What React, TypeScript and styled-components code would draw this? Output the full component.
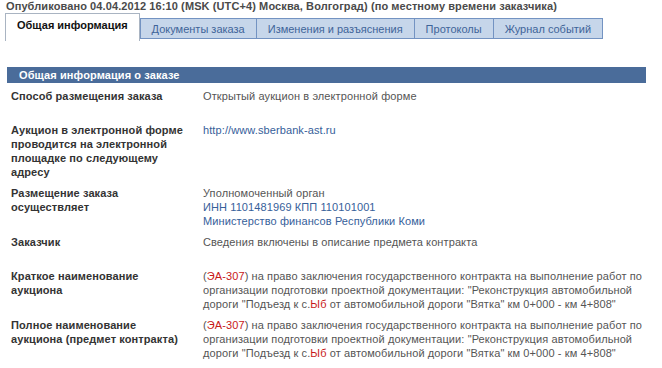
import React from "react";
import styled, { createGlobalStyle } from "styled-components";

const Global = createGlobalStyle`
  html, body { margin: 0; padding: 0; background: #fff; }
  body { font-family: "Liberation Sans", Arial, sans-serif; font-size: 11px; letter-spacing: 0.1px; }
`;

const Page = styled.div`
  padding: 0 5px;
  width: 652px;
`;

const Title = styled.div`
  font-weight: bold;
  color: #4a4a4a;
  line-height: 13px;
  padding-left: 1px;
`;

const TabBar = styled.div`
  display: flex;
  align-items: flex-end;
  height: 28px;
`;

const Tab = styled.div<{ $active?: boolean }>`
  box-sizing: border-box;
  height: ${(p) => (p.$active ? "28px" : "21px")};
  padding: ${(p) => (p.$active ? "4px 11px 0" : "3px 11px 0")};
  margin-bottom: ${(p) => (p.$active ? "0" : "2px")};
  background: ${(p) => (p.$active ? "#fff" : "#c6d6ea")};
  border: 1px solid ${(p) => (p.$active ? "#a9b4c2" : "#7393c2")};
  border-bottom: ${(p) => (p.$active ? "none" : "1px solid #7393c2")};
  border-left: ${(p) => (p.$active ? "1px solid #a9b4c2" : "none")};
  color: ${(p) => (p.$active ? "#111" : "#3e6499")};
  font-weight: ${(p) => (p.$active ? "bold" : "normal")};
  letter-spacing: 0;
  line-height: 14px;
  white-space: nowrap;
  &:nth-child(2) { border-left: 1px solid #7393c2; }
`;

const Section = styled.div`
  margin-top: 26px;
  margin-left: 2px;
  width: 639px;
`;

const Bar = styled.div`
  background: #4a6c9a;
  color: #fff;
  font-weight: bold;
  height: 16px;
  line-height: 16px;
  padding-left: 12px;
`;

const Rows = styled.div`
  display: grid;
  grid-template-columns: 192px 1fr;
  row-gap: 7px;
  padding: 6px 0 0 4px;
`;

const Label = styled.div`
  font-weight: bold;
  color: #333;
  line-height: 14px;
  min-height: 27px;
  padding-right: 16px;
`;

const Value = styled.div`
  color: #555;
  line-height: 14px;
  min-height: 27px;
`;

const Line = styled.div`
  white-space: nowrap;
`;

const Link = styled.a`
  display: block;
  color: #36609a;
  text-decoration: none;
`;

const Red = styled.span`
  color: #c81818;
`;

const tabs = [
  "Общая информация",
  "Документы заказа",
  "Изменения и разъяснения",
  "Протоколы",
  "Журнал событий",
];

const LongName = () => (
  <>
    <Line>
      (<Red>ЭА-307</Red>) на право заключения государственного контракта на выполнение работ по
    </Line>
    <Line>организации подготовки проектной документации: "Реконструкция автомобильной</Line>
    <Line>
      дороги "Подъезд к с.<Red>Ыб</Red> от автомобильной дороги "Вятка" км 0+000 - км 4+808"
    </Line>
  </>
);

export default function App() {
  return (
    <>
      <Global />
      <Page>
        <Title>
          Опубликовано 04.04.2012 16:10 (MSK (UTC+4) Москва, Волгоград) (по местному времени заказчика)
        </Title>
        <TabBar>
          {tabs.map((t, i) => (
            <Tab key={t} $active={i === 0}>
              {t}
            </Tab>
          ))}
        </TabBar>
        <Section>
          <Bar>Общая информация о заказе</Bar>
          <Rows>
            <Label>Способ размещения заказа</Label>
            <Value>Открытый аукцион в электронной форме</Value>

            <Label>
              Аукцион в электронной форме проводится на электронной площадке по следующему
              адресу
            </Label>
            <Value>
              <Link href="#">http://www.sberbank-ast.ru</Link>
            </Value>

            <Label>Размещение заказа осуществляет</Label>
            <Value>
              <Line>Уполномоченный орган</Line>
              <Link href="#">ИНН 1101481969 КПП 110101001</Link>
              <Link href="#">Министерство финансов Республики Коми</Link>
            </Value>

            <Label>Заказчик</Label>
            <Value>Сведения включены в описание предмета контракта</Value>

            <Label>Краткое наименование аукциона</Label>
            <Value>
              <LongName />
            </Value>

            <Label>Полное наименование аукциона (предмет контракта)</Label>
            <Value>
              <LongName />
            </Value>
          </Rows>
        </Section>
      </Page>
    </>
  );
}
